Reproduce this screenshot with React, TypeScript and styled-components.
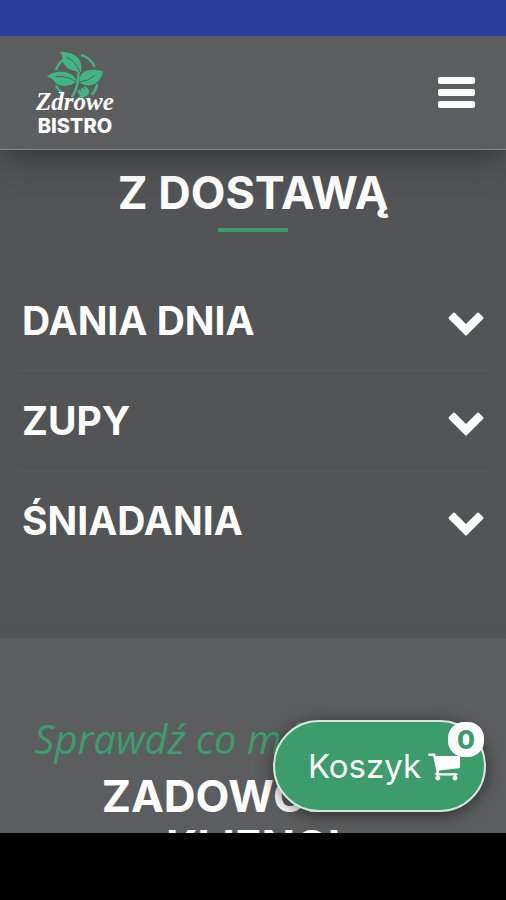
import React, { useState } from "react";
import styled, { createGlobalStyle } from "styled-components";

const GlobalStyle = createGlobalStyle`
  *, *::before, *::after { box-sizing: border-box; }
  body { margin: 0; background: #000; font-family: Inter, "Open Sans", sans-serif; color: #fff; }
  button, a { font: inherit; color: inherit; }
  h2, h3, p { margin: 0; }
`;

const green = "#3c9c6c";

const Screen = styled.div`
  height: 100vh;
  display: flex;
  flex-direction: column;
  overflow: hidden;
`;

const StatusBar = styled.div`
  flex: 0 0 36px;
  z-index: 2;
  background: #2d3d9e;
`;

const Header = styled.header`
  flex: none;
  z-index: 1;
  display: flex;
  align-items: center;
  justify-content: space-between;
  height: 114px;
  padding: 0 31px 0 36px;
  background: #5c5d5f;
  border-bottom: 1px solid #86878a;
  box-shadow: 0 4px 36px rgba(0, 0, 0, 0.45);
`;

const Logo = styled.a`
  display: flex;
  flex-direction: column;
  align-items: center;
  text-decoration: none;
`;

const LogoMark = styled.svg`
  width: 58px;
  height: 50px;
`;

const LogoScript = styled.span`
  margin-top: -12px;
  font: italic 700 25px/28px "Liberation Serif", serif;
`;

const LogoName = styled.span`
  font-size: 20px;
  font-weight: 800;
  line-height: 20px;
`;

const IconButton = styled.button`
  display: flex;
  padding: 0;
  border: 0;
  background: none;
  cursor: pointer;
`;

const BarsIcon = styled.svg`
  width: 38px;
  height: 32px;
  fill: #fff;
`;

const Content = styled.main`
  flex: 1;
  min-height: 0;
  display: flex;
  flex-direction: column;
  overflow: hidden;
`;

const MenuSection = styled.section`
  flex: none;
  padding: 17px 18px 68px;
  background: #535456;
`;

const Title = styled.h2`
  font-size: 45px;
  font-weight: 700;
  line-height: 52px;
  text-align: center;
  text-transform: uppercase;
`;

const Rule = styled.hr`
  width: 70px;
  height: 4px;
  margin: 9px auto 39px;
  border: 0;
  background: ${green};
`;

const Category = styled.h3<{ $divided: boolean }>`
  height: 100px;
  border-bottom: 1px solid ${(p) => (p.$divided ? "#5a5b5d" : "transparent")};
`;

const CategoryToggle = styled.button`
  display: flex;
  align-items: center;
  justify-content: space-between;
  width: 100%;
  height: 100%;
  padding: 0 4px;
  border: 0;
  background: none;
  font-size: 39px;
  font-weight: 700;
  text-transform: uppercase;
  cursor: pointer;
`;

const Chevron = styled.svg`
  width: 36px;
  height: 24px;
  margin-top: 6px;
  fill: #fff;
`;

const ReviewsSection = styled.section`
  flex: none;
  padding: 72px 18px;
  background: #5c5d5f;
  box-shadow: 0 0 6px #5c5d5f;
`;

const Tagline = styled.p`
  color: ${green};
  font: italic 400 40px/56px "Open Sans", sans-serif;
  text-align: center;
  white-space: nowrap;
`;

const ReviewsTitle = styled(Title)`
  margin-top: 4px;
  font-size: 44px;
  line-height: 50px;
`;

const BottomBar = styled.footer`
  position: relative;
  flex: 0 0 67px;
  background: #000;
`;

const CartButton = styled.button`
  position: absolute;
  right: 20px;
  bottom: 88px;
  display: flex;
  align-items: center;
  gap: 7px;
  height: 92px;
  padding: 0 24px 0 33px;
  border: 2px solid #d5e6dd;
  border-radius: 46px;
  background: ${green};
  box-shadow: 0 3px 16px rgba(0, 0, 0, 0.5);
  font-size: 33px;
  cursor: pointer;
`;

const CartIcon = styled.svg`
  width: 32px;
  height: 28px;
  margin-top: 2px;
  fill: #fff;
`;

const CartCount = styled.span`
  position: absolute;
  top: 0;
  right: 0;
  width: 36px;
  height: 35px;
  border-radius: 16px;
  background: #fff;
  color: ${green};
  font-size: 26px;
  font-weight: 800;
  line-height: 35px;
  text-align: center;
`;

const categories = ["Dania dnia", "Zupy", "Śniadania"];

function LeafMark() {
  return (
    <LogoMark viewBox="42 10 175 150" aria-hidden="true">
      <g fill="none" stroke="#3fb583" strokeWidth="7">
        <path d="M96 38Q78 50 72 70" />
        <path d="M148 25Q177 33 189 60" />
        <path d="M72 116Q80 134 97 143" />
        <path d="M196 112Q194 130 180 145" />
        <path d="M141 66Q141 122 120 152" />
      </g>
      <g fill="#3fb583">
        <path d="M84 15C124 14 158 36 147 76C112 74 90 56 92 34Q91 24 84 15Z" />
        <path d="M44 90C66 68 124 68 135 104C112 124 78 122 66 102Q58 92 44 90Z" />
        <path d="M214 74C208 114 170 128 143 108C140 68 180 64 214 74Z" />
        <path d="M136 133L144 129L152 140L146 126L154 124L161 135L156 121L164 120L172 132C173 142 165 151 157 151L142 165L134 157L145 148Z" />
      </g>
      <g fill="none" stroke="#5c5d5f" strokeWidth="3">
        <path d="M103 30Q133 45 145 77" />
        <path d="M72 89Q110 88 134 106" />
        <path d="M190 86Q170 104 144 106" />
      </g>
    </LogoMark>
  );
}

export default function App() {
  const [open, setOpen] = useState<string | null>(null);
  return (
    <Screen>
      <GlobalStyle />
      <StatusBar />
      <Header>
        <Logo href="#">
          <LeafMark />
          <LogoScript>Zdrowe</LogoScript>
          <LogoName>BISTRO</LogoName>
        </Logo>
        <IconButton aria-label="Menu">
          <BarsIcon viewBox="0 0 38 32">
            <rect x="1" y="0" width="37" height="7" rx="2" />
            <rect x="1" y="12" width="37" height="7" rx="2" />
            <rect x="1" y="24" width="37" height="7" rx="2" />
          </BarsIcon>
        </IconButton>
      </Header>
      <Content>
        <MenuSection>
          <Title>Z dostawą</Title>
          <Rule />
          {categories.map((name, i) => (
            <Category key={name} $divided={i < categories.length - 1}>
              <CategoryToggle
                aria-expanded={open === name}
                onClick={() => setOpen(open === name ? null : name)}
              >
                {name}
                <Chevron viewBox="0 0 36 24" aria-hidden="true">
                  <path d="M1 5L5 1Q6 0 7 1L18 12L29 1Q30 0 31 1L35 5Q36 6 35 7L19 23Q18 24 17 23L1 7Q0 6 1 5Z" />
                </Chevron>
              </CategoryToggle>
            </Category>
          ))}
        </MenuSection>
        <ReviewsSection>
          <Tagline>Sprawdź co mówią o nas</Tagline>
          <ReviewsTitle>
            Zadowoleni
            <br />
            klienci
          </ReviewsTitle>
        </ReviewsSection>
      </Content>
      <BottomBar>
        <CartButton>
          Koszyk
          <CartIcon viewBox="0 256 1664 1408" aria-hidden="true">
            <path d="M640 1536q0 52-38 90t-90 38-90-38-38-90 38-90 90-38 90 38 38 90zm896 0q0 52-38 90t-90 38-90-38-38-90 38-90 90-38 90 38 38 90zm128-1088v512q0 24-16.500 42.500t-40.500 21.500l-1044 122q13 60 13 70 0 16-24 64h920q26 0 45 19t19 45-19 45-45 19h-1024q-26 0-45-19t-19-45q0-11 8-31.500t16-36 21.500-40 15.500-29.500l-177-823h-204q-26 0-45-19t-19-45 19-45 45-19h256q16 0 28.500 6.500t19.500 15.500 13 24.500 8 26 5.500 29.500 4.500 26h1201q26 0 45 19t19 45z" />
          </CartIcon>
          <CartCount>0</CartCount>
        </CartButton>
      </BottomBar>
    </Screen>
  );
}
